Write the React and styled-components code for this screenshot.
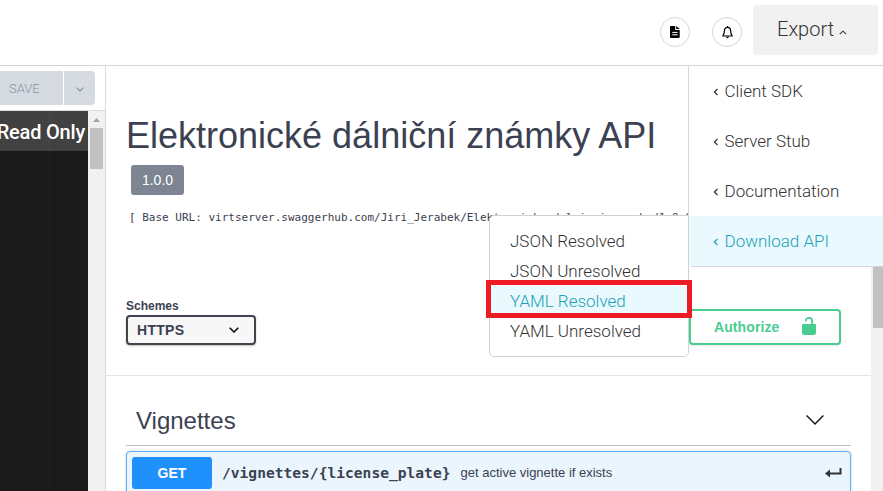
import React from 'react';
import styled, { createGlobalStyle } from 'styled-components';

const GlobalStyle = createGlobalStyle`
  * { box-sizing: border-box; }
  body {
    margin: 0;
    overflow: hidden;
    background: #fff;
    font-family: "Liberation Sans", Arial, sans-serif;
    color: #3b4151;
  }
`;

const Page = styled.div`
  position: relative;
  display: flex;
  flex-direction: column;
  width: 883px;
  height: 491px;
  overflow: hidden;
`;

const Header = styled.header`
  display: flex;
  flex: none;
  justify-content: flex-end;
  align-items: flex-start;
  height: 66px;
  padding: 5px 5px 0 0;
  border-bottom: 1px solid #d3d5d7;
`;

const RoundButton = styled.button`
  display: flex;
  align-items: center;
  justify-content: center;
  width: 30px;
  height: 30px;
  margin: 12px ${(p) => p.$gap}px 0 0;
  padding: 0;
  border: 1px solid #cfd8dc;
  border-radius: 50%;
  background: #fff;
`;

const ExportButton = styled.button`
  display: flex;
  align-items: center;
  width: 125px;
  height: 50px;
  padding: 0 0 2px 24px;
  border: 0;
  border-radius: 4px;
  background: #f1f1f1;
  color: #333;
  font: 300 20px Roboto, sans-serif;

  svg { margin: 6px 0 0 5px; }
`;

const Body = styled.div`
  display: flex;
  flex: 1;
  min-height: 0;
`;

const EditorPane = styled.section`
  display: flex;
  flex-direction: column;
  flex: none;
  width: 106px;
  border-right: 1px solid #dcdcdc;
`;

const EditorToolbar = styled.div`
  display: flex;
  gap: 1px;
  height: 45px;
  padding-top: 5px;
  border-bottom: 1px solid #dcdcdc;
`;

const SaveButton = styled.button`
  width: 63px;
  height: 34px;
  padding: 0 0 0 9px;
  border: 0;
  background: #d6dbe1;
  color: #8393a5;
  text-align: left;
  font: 300 13px Roboto, sans-serif;
`;

const SaveMenuButton = styled.button`
  display: flex;
  align-items: center;
  justify-content: center;
  width: 31px;
  height: 34px;
  padding: 2px 0 0;
  border: 0;
  border-radius: 0 4px 4px 0;
  background: #d6dbe1;
`;

const EditorBody = styled.div`
  display: flex;
  flex: 1;
`;

const Code = styled.div`
  width: 88px;
  background: linear-gradient(90deg, #1a1a1a 49px, #232323 49px, #232323 50px, #1a1a1a 50px);
`;

const ReadOnly = styled.div`
  display: flex;
  align-items: center;
  justify-content: flex-end;
  height: 40px;
  padding: 2px 3px 0 0;
  background: linear-gradient(90deg, #414141 49px, #484848 49px, #484848 50px, #414141 50px);
  color: #fff;
  font: 500 20px Roboto, sans-serif;
  letter-spacing: -0.2px;
  white-space: nowrap;
`;

const EditorScroll = styled.div`
  display: flex;
  flex-direction: column;
  align-items: center;
  width: 17px;
  background: #f1f1f1;

  svg { margin-top: 7px; }
`;

const EditorThumb = styled.div`
  width: 13px;
  height: 41px;
  margin-top: 6px;
  background: #c1c1c1;
`;

const Docs = styled.main`
  flex: 1;
  min-width: 0;
  overflow: hidden;
`;

const DocsScroll = styled.div`
  flex: none;
  width: 12px;
  padding-left: 2px;
  background: #f1f1f1;
`;

const DocsThumb = styled.div`
  height: 262px;
  background: #c1c1c1;
`;

const Info = styled.div`
  display: flex;
  flex-direction: column;
  align-items: flex-start;
  height: 239px;
  padding: 49px 0 0 20px;
  white-space: nowrap;
`;

const Title = styled.h1`
  margin: 0;
  font-size: 36px;
  font-weight: 400;
  line-height: 42px;
`;

const Version = styled.span`
  width: 53px;
  height: 30px;
  margin: 8px 0 0 5px;
  border-radius: 3px;
  background: #7d8492;
  color: #fff;
  font-size: 14px;
  line-height: 31px;
  text-align: center;
`;

const BaseUrl = styled.div`
  margin: 16px 0 0 3px;
  font: 11px/14px "DejaVu Sans Mono", monospace;
`;

const SchemeBar = styled.div`
  display: flex;
  justify-content: space-between;
  align-items: flex-start;
  height: 71px;
  padding: 0 30px 0 20px;
  border-bottom: 1px solid #e3e4e6;
`;

const SchemeLabel = styled.label`
  display: flex;
  flex-direction: column;
  margin-top: -7px;
  gap: 1px;
  font-size: 12px;
  font-weight: 700;
  line-height: 16px;
`;

const SchemeSelect = styled.div`
  display: flex;
  align-items: center;
  justify-content: space-between;
  width: 130px;
  height: 30px;
  padding: 0 15px 0 9px;
  border: 2px solid #41444e;
  border-radius: 4px;
  background: #f7f7f7;
  box-shadow: 0 1px 2px rgba(0, 0, 0, 0.25);
  font-size: 14px;
  letter-spacing: 0.3px;
`;

const Authorize = styled.button`
  display: flex;
  align-items: center;
  justify-content: space-between;
  width: 152px;
  height: 36px;
  margin-top: 4px;
  padding: 0 23px;
  border: 2px solid #49cc90;
  border-radius: 4px;
  background: #fff;
  box-shadow: 0 1px 2px rgba(0, 0, 0, 0.1);
  color: #49cc90;
  font: 700 14px "Liberation Sans", Arial, sans-serif;
  letter-spacing: 0.1px;

  svg { margin-bottom: 2px; }
`;

const Operations = styled.section`
  padding: 0 20px;
`;

const TagHeading = styled.h2`
  display: flex;
  align-items: center;
  justify-content: space-between;
  height: 70px;
  margin: 0;
  padding: 21px 27px 0 10px;
  border-bottom: 1px solid #bfc0c4;
  font-size: 24px;
  font-weight: 400;

  svg { margin-bottom: 2px; }
`;

const Operation = styled.div`
  display: flex;
  align-items: center;
  height: 46px;
  margin-top: 5px;
  padding: 0 8px 2px 5px;
  border: 1px solid #61affe;
  border-radius: 4px;
  background: #ebf5fe;
  box-shadow: 0 0 3px rgba(0, 0, 0, 0.19);

  svg { margin: 0 0 1px auto; }
`;

const Method = styled.span`
  width: 80px;
  height: 32px;
  border-radius: 3px;
  background: #2090fd;
  color: #fff;
  font-size: 14px;
  font-weight: 700;
  line-height: 33px;
  text-align: center;
`;

const Path = styled.span`
  margin: 0 0 1px 10px;
  font: 700 14.6px "DejaVu Sans Mono", monospace;
`;

const Summary = styled.span`
  margin: 0 0 1px 10px;
  font-size: 13px;
`;

const ExportMenu = styled.nav`
  position: absolute;
  top: 66px;
  left: 688px;
  width: 200px;
  border: 1px solid #d3d5d7;
  border-top: 0;
  border-radius: 0 0 5px 5px;
  background: #fff;
`;

const MenuItem = styled.div`
  display: flex;
  align-items: center;
  gap: 6.5px;
  height: ${(p) => p.$height}px;
  padding-left: ${(p) => p.$indent}px;
  background: ${(p) => (p.$active ? '#e9f9fd' : '#fff')};
  color: ${(p) => (p.$active ? '#1ba1b9' : '#333')};
  font: 300 17px Roboto, sans-serif;
  white-space: nowrap;

  svg { margin-top: 1px; }
`;

const SubMenu = styled.nav`
  position: absolute;
  top: 215px;
  left: 489px;
  width: 200px;
  height: 142px;
  padding: 10px 0;
  border: 1px solid #d0d2d4;
  border-radius: 5px;
  border-top-right-radius: 0;
  background: #fff;
`;

const Highlight = styled.div`
  position: absolute;
  top: 280px;
  left: 486px;
  width: 206px;
  height: 38px;
  border: 5px solid #ed1c24;
`;

const Chevron = ({ w, h, d, stroke = '#333', sw = 1.1 }) => (
  <svg width={w} height={h} viewBox={`0 0 ${w} ${h}`} fill="none" stroke={stroke} strokeWidth={sw}>
    <path d={d} />
  </svg>
);

const exportItems = ['Client SDK', 'Server Stub', 'Documentation', 'Download API'];
const downloadItems = ['JSON Resolved', 'JSON Unresolved', 'YAML Resolved', 'YAML Unresolved'];

export default function App() {
  return (
    <Page>
      <GlobalStyle />
      <Header>
        <RoundButton $gap={22} aria-label="Notes">
          <svg width="10" height="12" viewBox="0 0 10 12">
            <path d="M.9 0H5.2V3.9H9.7V11Q9.7 12 8.7 12H1Q0 12 0 11V.9Q0 0 .9 0Z" fill="#000" />
            <path d="M6.2 0L9.7 3.1H6.2Z" fill="#000" />
            <path d="M2.2 6.4H7.6M2.2 8.8H7.6" stroke="#fff" />
          </svg>
        </RoundButton>
        <RoundButton $gap={11} aria-label="Notifications">
          <svg width="11" height="13" viewBox="0 0 11 13" fill="none" stroke="#000">
            <path d="M5.5 0V1.2M5.5 1.3C3.5 1.3 2.4 2.8 2.4 4.8C2.4 7.4 1.9 8.5 .8 10H10.2C9.1 8.5 8.6 7.4 8.6 4.8C8.6 2.8 7.5 1.3 5.5 1.3Z" strokeWidth="1.2" strokeLinejoin="round" />
            <path d="M4 10.8Q4.2 12.2 5.5 12.2Q6.8 12.2 7 10.8Z" fill="#000" stroke="none" />
          </svg>
        </RoundButton>
        <ExportButton>
          Export
          <Chevron w={8} h={5} d="M.8 4.2L4 1.2L7.2 4.2" />
        </ExportButton>
      </Header>
      <Body>
        <EditorPane>
          <EditorToolbar>
            <SaveButton>SAVE</SaveButton>
            <SaveMenuButton aria-label="Save options">
              <Chevron w={8} h={5} d="M.6 .6L4 4L7.4 .6" stroke="#7f90a2" sw={1.2} />
            </SaveMenuButton>
          </EditorToolbar>
          <EditorBody>
            <Code>
              <ReadOnly>Read Only</ReadOnly>
            </Code>
            <EditorScroll>
              <svg width="7" height="4" viewBox="0 0 7 4"><path d="M3.5 0L7 4H0Z" fill="#a3a3a3" /></svg>
              <EditorThumb />
            </EditorScroll>
          </EditorBody>
        </EditorPane>
        <Docs>
          <Info>
            <Title>Elektronické dálniční známky API</Title>
            <Version>1.0.0</Version>
            <BaseUrl>[ Base URL: virtserver.swaggerhub.com/Jiri_Jerabek/Elektronicke_dalnicni_znamky/1.0.0 ]</BaseUrl>
          </Info>
          <SchemeBar>
            <SchemeLabel>
              Schemes
              <SchemeSelect>
                HTTPS
                <Chevron w={10} h={6} d="M.7 .7L5 5L9.3 .7" stroke="#111" sw={1.6} />
              </SchemeSelect>
            </SchemeLabel>
            <Authorize>
              Authorize
              <svg width="14" height="18" viewBox="0 0 14 18">
                <path d="M3.8 4.2C3.8 2.1 5 .9 7 .9S10.2 2.1 10.2 4.2V8" fill="none" stroke="#49cc90" strokeWidth="1.8" />
                <path d="M1 7H13Q14 7 14 8V15.5Q14 18 11.5 18H2.5Q0 18 0 15.5V8Q0 7 1 7Z" fill="#49cc90" />
              </svg>
            </Authorize>
          </SchemeBar>
          <Operations>
            <TagHeading>
              Vignettes
              <Chevron w={18} h={10} d="M.6 .6L9 9L17.4 .6" stroke="#111" sw={1.4} />
            </TagHeading>
            <Operation>
              <Method>GET</Method>
              <Path>/vignettes/{'{'}license_plate{'}'}</Path>
              <Summary>get active vignette if exists</Summary>
              <svg width="17" height="10" viewBox="0 0 17 10">
                <path d="M15.5 0V5.5H4" fill="none" stroke="#333" strokeWidth="2" />
                <path d="M0 5.5L5 1.5V9.5Z" fill="#333" />
              </svg>
            </Operation>
          </Operations>
        </Docs>
        <DocsScroll>
          <DocsThumb />
        </DocsScroll>
      </Body>
      <ExportMenu>
        {exportItems.map((label) => (
          <MenuItem key={label} $height={50} $indent={24} $active={label === 'Download API'}>
            <Chevron w={5} h={8} d="M4.5 1L1.4 4L4.5 7" stroke="currentColor" sw={1.2} />
            {label}
          </MenuItem>
        ))}
      </ExportMenu>
      <SubMenu>
        {downloadItems.map((label) => (
          <MenuItem key={label} $height={30} $indent={20} $active={label === 'YAML Resolved'}>
            {label}
          </MenuItem>
        ))}
      </SubMenu>
      <Highlight />
    </Page>
  );
}
